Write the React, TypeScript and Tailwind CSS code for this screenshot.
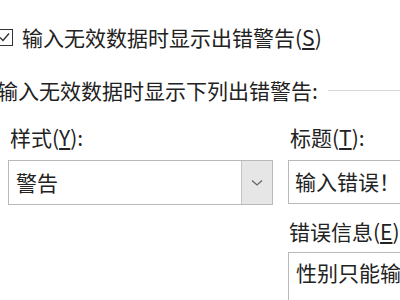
import React from 'react';

const font = { fontFamily: '"Microsoft YaHei", "Noto Sans CJK SC", "Noto Sans", sans-serif' };

function Checkbox() {
  return (
    <div className="w-[17px] h-[17px] border border-[#333] bg-white flex items-center justify-center shrink-0">
      <svg width="13" height="13" viewBox="0 0 13 13" fill="none">
        <path d="M2 6.5 L5 9.5 L11 2.5" stroke="#333" strokeWidth="1.4" />
      </svg>
    </div>
  );
}

export default function App() {
  return (
    <div className="w-[400px] h-[300px] overflow-hidden bg-white text-[21px] text-[#222]" style={font}>
      <div className="pt-[26px] ml-[-4px] flex items-center gap-[9px] h-[48px] leading-[22px]">
        <Checkbox />
        <span>
          输入无效数据时显示出错警告(<span className="underline underline-offset-2">S</span>)
        </span>
      </div>

      <div className="mt-[31px] ml-[-3px] flex items-center leading-[22px]">
        <span className="whitespace-nowrap">输入无效数据时显示下列出错警告:</span>
        <div className="flex-1 ml-[10px] h-px bg-[#d6d6d6]" />
      </div>

      <div className="mt-[25px] flex gap-[15px] pl-[8px]">
        <div className="w-[265px] shrink-0">
          <div className="pl-[2px] leading-[22px]">
            样式(<span className="underline underline-offset-2">Y</span>):
          </div>
          <div className="mt-[12px] h-[45px] flex border border-[#b9b9b9]">
            <div className="flex-1 flex items-center pl-[7px]">警告</div>
            <div className="w-[31px] bg-[#e6e6e6] border-l border-[#c4c4c4] flex items-center justify-center">
              <svg width="12" height="8" viewBox="0 0 12 8" fill="none">
                <path d="M1 1.5 L6 6 L11 1.5" stroke="#666" strokeWidth="1.3" />
              </svg>
            </div>
          </div>
        </div>

        <div className="w-[200px] shrink-0">
          <div className="pl-[2px] leading-[22px]">
            标题(<span className="underline underline-offset-2">T</span>):
          </div>
          <div className="mt-[12px] h-[44px] border border-[#b9b9b9] flex items-center pl-[6px] whitespace-nowrap">
            输入错误！
          </div>
          <div className="mt-[16px] pl-[1px] leading-[22px] whitespace-nowrap">
            错误信息(<span className="underline underline-offset-2">E</span>):
          </div>
          <div className="mt-[10px] h-[80px] border border-[#b9b9b9] pl-[7px] pt-[8px] leading-[22px] whitespace-nowrap">
            性别只能输入男或女！
          </div>
        </div>
      </div>
    </div>
  );
}
